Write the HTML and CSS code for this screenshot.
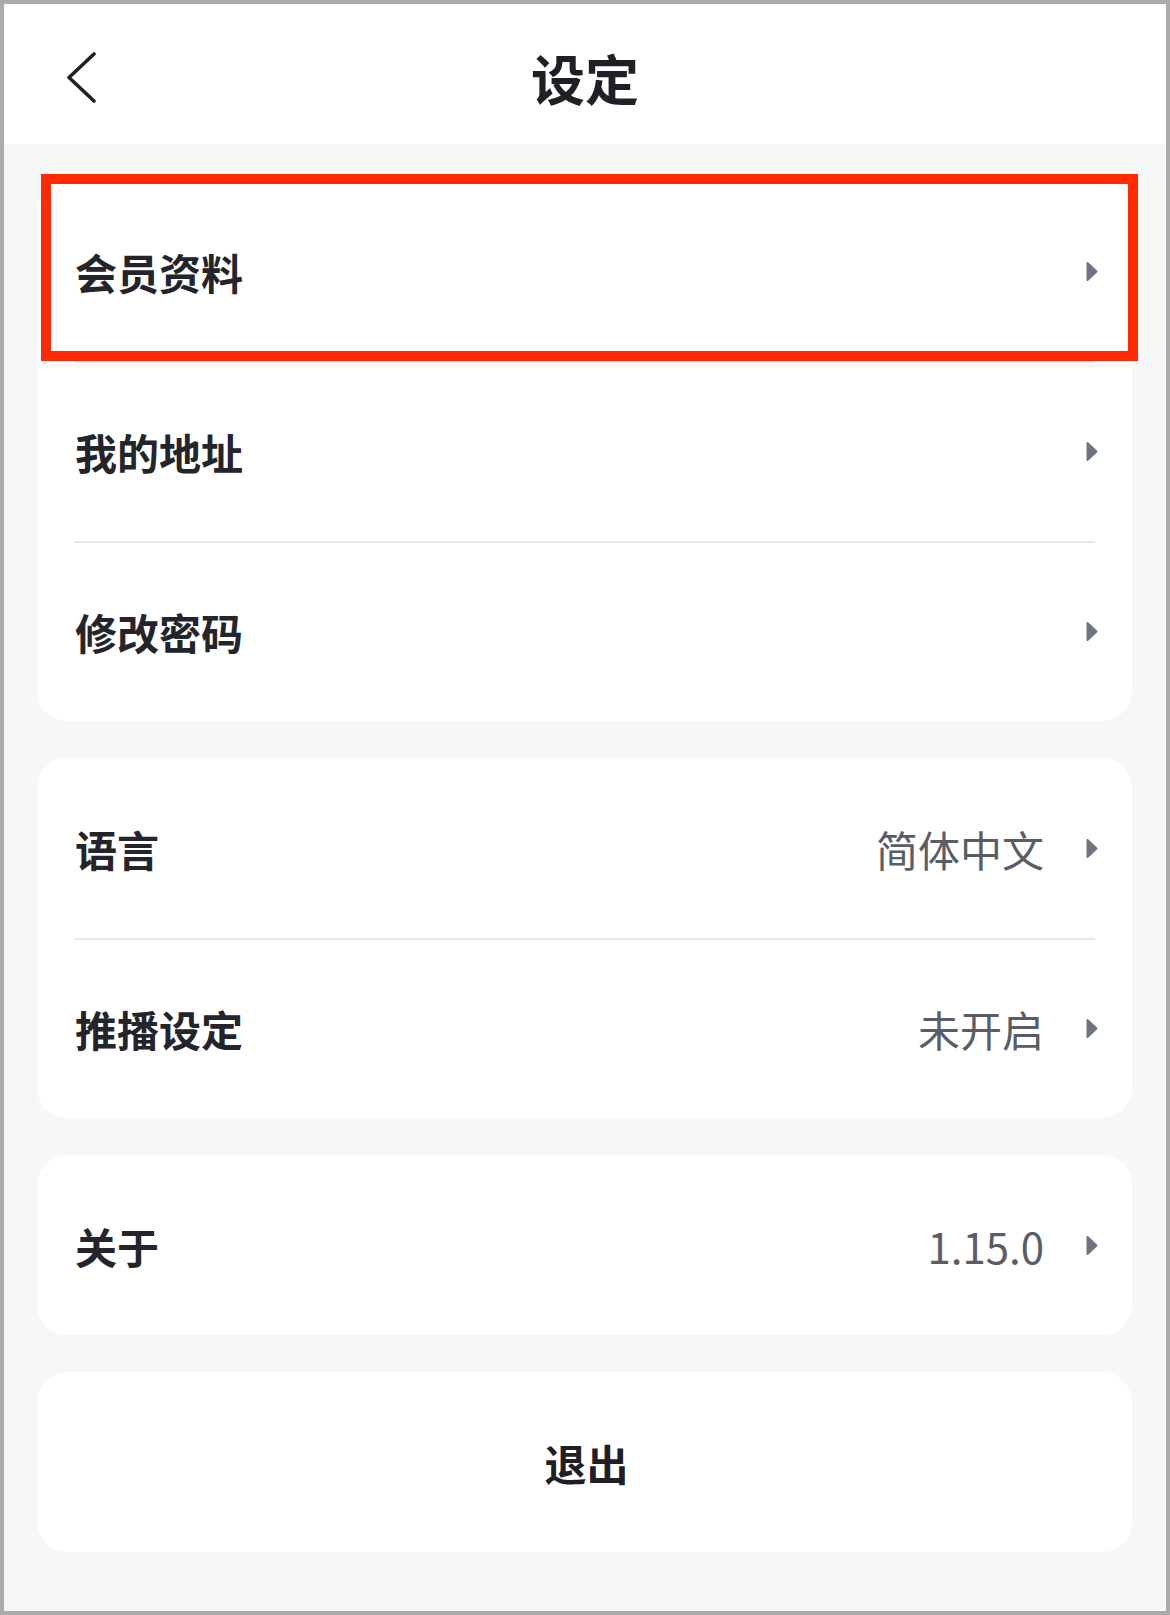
FILE: index.html
```html
<!DOCTYPE html>
<html lang="zh-CN">
<head>
    <meta charset="UTF-8">
    <meta name="viewport" content="width=device-width, initial-scale=1.0">
    <title>设定</title>
    <link rel="stylesheet" href="styles.css">
</head>
<body>

<div class="screen">
    <header class="topbar">
        <div class="back">
            <svg width="32" height="52" viewBox="0 0 32 52">
                <polyline points="29,2 4,25.5 29,49" fill="none" stroke="#1f2026" stroke-width="3.6" stroke-linecap="round" stroke-linejoin="round"/>
            </svg>
        </div>
        <h1>设定</h1>
        <div></div>
    </header>

    <main class="content">
        <section class="card">
            <div class="row highlight">
                <span class="label">会员资料</span>
                <span class="arrow"><svg width="12" height="21" viewBox="0 0 12 21"><path d="M1.5 2 L10.5 10.5 L1.5 19 Z" fill="#6f7481" stroke="#6f7481" stroke-width="2" stroke-linejoin="round"/></svg></span>
            </div>
            <div class="row">
                <span class="label">我的地址</span>
                <span class="arrow"><svg width="12" height="21" viewBox="0 0 12 21"><path d="M1.5 2 L10.5 10.5 L1.5 19 Z" fill="#6f7481" stroke="#6f7481" stroke-width="2" stroke-linejoin="round"/></svg></span>
            </div>
            <div class="row">
                <span class="label">修改密码</span>
                <span class="arrow"><svg width="12" height="21" viewBox="0 0 12 21"><path d="M1.5 2 L10.5 10.5 L1.5 19 Z" fill="#6f7481" stroke="#6f7481" stroke-width="2" stroke-linejoin="round"/></svg></span>
            </div>
        </section>

        <section class="card">
            <div class="row">
                <span class="label">语言</span>
                <span class="value">简体中文</span>
                <span class="arrow"><svg width="12" height="21" viewBox="0 0 12 21"><path d="M1.5 2 L10.5 10.5 L1.5 19 Z" fill="#6f7481" stroke="#6f7481" stroke-width="2" stroke-linejoin="round"/></svg></span>
            </div>
            <div class="row">
                <span class="label">推播设定</span>
                <span class="value">未开启</span>
                <span class="arrow"><svg width="12" height="21" viewBox="0 0 12 21"><path d="M1.5 2 L10.5 10.5 L1.5 19 Z" fill="#6f7481" stroke="#6f7481" stroke-width="2" stroke-linejoin="round"/></svg></span>
            </div>
        </section>

        <section class="card">
            <div class="row">
                <span class="label">关于</span>
                <span class="value">1.15.0</span>
                <span class="arrow"><svg width="12" height="21" viewBox="0 0 12 21"><path d="M1.5 2 L10.5 10.5 L1.5 19 Z" fill="#6f7481" stroke="#6f7481" stroke-width="2" stroke-linejoin="round"/></svg></span>
            </div>
        </section>

        <section class="card">
            <div class="row logout">退出</div>
        </section>
    </main>
</div>

</body>
</html>
```

FILE: styles.css
```css
* {
    box-sizing: border-box;
}
body {
    margin: 0;
    font-family: "Noto Sans CJK SC", "Noto Sans", sans-serif;
    background-color: #ababab;
}
.screen {
    width: 1170px;
    height: 1615px;
    border: 4px solid #ababab;
    background-color: #f6f7f9;
    display: flex;
    flex-direction: column;
}
.topbar {
    height: 140px;
    padding-top: 8px;
    background-color: #fff;
    display: grid;
    grid-template-columns: 1fr auto 1fr;
    align-items: center;
}
.back {
    padding-left: 61px;
    display: flex;
    align-items: center;
}
.topbar h1 {
    margin: 0;
    font-size: 54px;
    font-weight: 700;
    color: #1f2026;
    line-height: 1;
}
.content {
    padding: 37px 34px 0 33px;
    display: flex;
    flex-direction: column;
    gap: 37px;
}
.card {
    background-color: #fff;
    border-radius: 30px;
}
.row {
    position: relative;
    height: 180px;
    padding: 0 34px 0 38px;
    display: flex;
    align-items: center;
}
.row + .row {
    background: linear-gradient(#e8e8ea, #e8e8ea) 37px 0 / calc(100% - 74px) 2px no-repeat;
}
.label {
    font-size: 42px;
    font-weight: 700;
    color: #23252b;
    flex: 1;
}
.value {
    font-size: 42px;
    font-weight: 400;
    color: #5a5d65;
    margin-right: 42px;
}
.arrow {
    display: flex;
    align-items: center;
}
.logout {
    justify-content: center;
    font-size: 42px;
    font-weight: 700;
    color: #1f2026;
}
.highlight::after {
    content: "";
    position: absolute;
    left: 4px;
    right: -6px;
    top: -7px;
    bottom: 0;
    border: 10px solid #ff2a00;
}
```
